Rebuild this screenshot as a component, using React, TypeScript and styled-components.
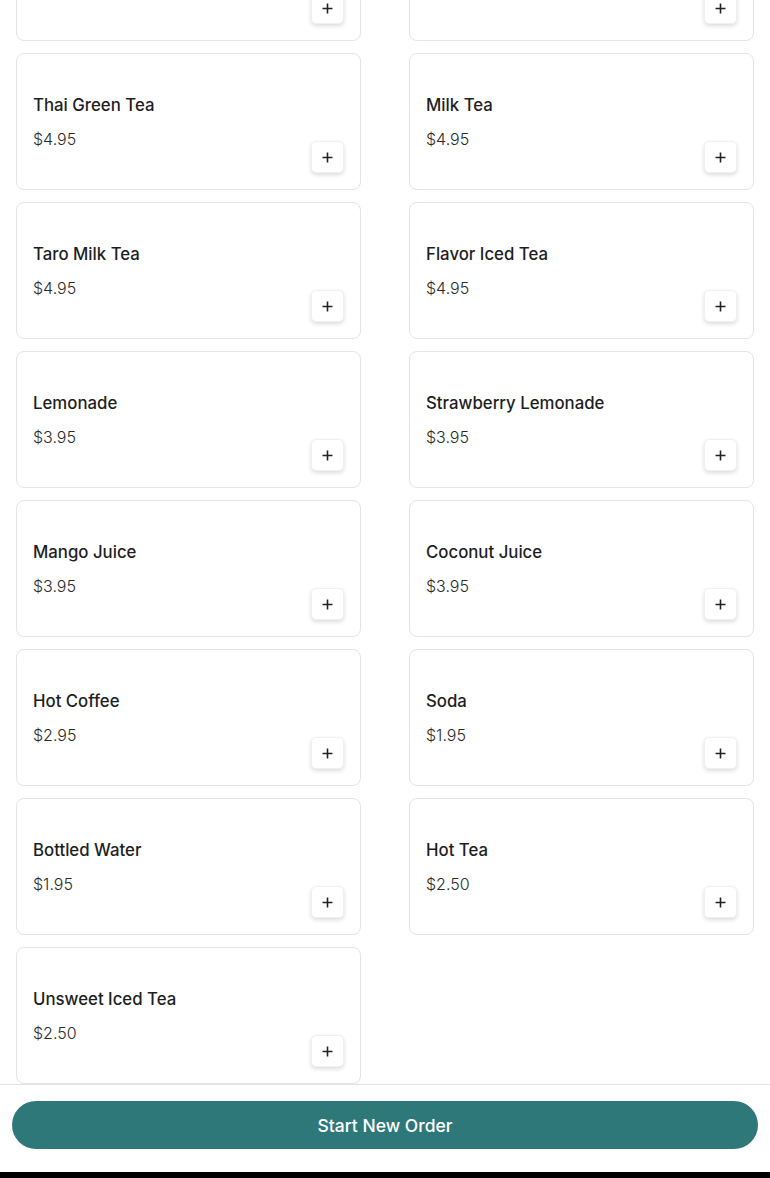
import styled, { createGlobalStyle } from "styled-components";

const GlobalStyle = createGlobalStyle`
    html, body {
        margin: 0;
        padding: 0;
        background: #ffffff;
    }

    * {
        box-sizing: border-box;
    }
`

interface MenuItem {
    name: string
    price: string
}

const items: MenuItem[] = [
    { name: "Classic Milk Tea", price: "$4.95" },
    { name: "Jasmine Green Tea", price: "$4.95" },
    { name: "Thai Green Tea", price: "$4.95" },
    { name: "Milk Tea", price: "$4.95" },
    { name: "Taro Milk Tea", price: "$4.95" },
    { name: "Flavor Iced Tea", price: "$4.95" },
    { name: "Lemonade", price: "$3.95" },
    { name: "Strawberry Lemonade", price: "$3.95" },
    { name: "Mango Juice", price: "$3.95" },
    { name: "Coconut Juice", price: "$3.95" },
    { name: "Hot Coffee", price: "$2.95" },
    { name: "Soda", price: "$1.95" },
    { name: "Bottled Water", price: "$1.95" },
    { name: "Hot Tea", price: "$2.50" },
    { name: "Unsweet Iced Tea", price: "$2.50" },
]

const Page = styled.div`
    width: 770px;
    height: 1178px;

    display: flex;
    flex-direction: column;

    font-family: Inter, "Liberation Sans", sans-serif;
    color: #1f1f1f;
    overflow: hidden;
`

const MenuScroll = styled.div`
    flex: 1;
    overflow: hidden;
`

// list is scrolled: the first row sits partly above the viewport
const MenuGrid = styled.div`
    margin-top: -96px;
    padding: 0 16px;

    display: grid;
    grid-template-columns: 1fr 1fr;
    column-gap: 48px;
    row-gap: 12px;
`

const Card = styled.div`
    height: 137px;
    padding: 16px;

    border: 1px solid #e4e4e4;
    border-radius: 8px;
    background: #ffffff;

    display: flex;
    align-items: center;
    justify-content: space-between;
`

const Info = styled.div`
    display: flex;
    flex-direction: column;
    gap: 10px;
`

const Name = styled.p`
    margin: 0;
    font-size: 16.8px;
    font-weight: 500;
    line-height: 24px;
    color: #1e1e1e;
`

const Price = styled.p`
    margin: 0;
    font-size: 16px;
    font-weight: 300;
    line-height: 24px;
    color: #2a2a2a;
`

const AddButton = styled.button`
    align-self: flex-end;
    width: 33px;
    height: 32px;
    padding: 0;

    display: flex;
    align-items: center;
    justify-content: center;

    border: 1px solid #f0f0f0;
    border-radius: 5px;
    background: #ffffff;
    box-shadow: 0 2px 4px rgba(0, 0, 0, 0.14);
    cursor: pointer;
`

const Footer = styled.div`
    padding: 16px 12px 23px;
    border-top: 1px solid #e2e2e2;
    background: #ffffff;
`

const StartButton = styled.button`
    width: 100%;
    height: 48px;

    border: none;
    border-radius: 24px;
    background: #2f7879;
    color: #ffffff;

    font-family: inherit;
    font-size: 17.5px;
    font-weight: 500;
    cursor: pointer;
`

const BottomBar = styled.div`
    height: 6px;
    background: #000000;
`

function PlusIcon() {
    return (
        <svg width="11" height="11" viewBox="0 0 11 11">
            <path
                d="M5.5 0.5v10M0.5 5.5h10"
                stroke="#222"
                strokeWidth="1.6"
                fill="none"
            />
        </svg>
    )
}

function MenuCard(props: MenuItem) {
    return (
        <Card>
            <Info>
                <Name>{props.name}</Name>
                <Price>{props.price}</Price>
            </Info>
            <AddButton aria-label={`Add ${props.name}`}>
                <PlusIcon />
            </AddButton>
        </Card>
    )
}

export default function App() {
    return (
        <>
            <GlobalStyle />
            <Page>
                <MenuScroll>
                    <MenuGrid>
                        {items.map((item) => (
                            <MenuCard
                                key={item.name}
                                name={item.name}
                                price={item.price}
                            />
                        ))}
                    </MenuGrid>
                </MenuScroll>
                <Footer>
                    <StartButton>Start New Order</StartButton>
                </Footer>
                <BottomBar />
            </Page>
        </>
    )
}
